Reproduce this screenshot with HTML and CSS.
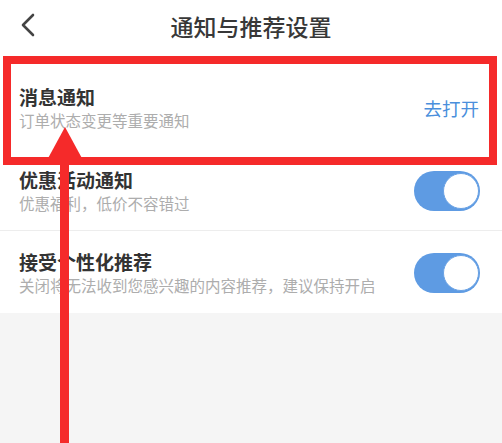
FILE: index.html
```html
<!DOCTYPE html>
<html lang="zh-CN">
<head>
    <meta charset="UTF-8">
    <title>通知与推荐设置</title>
    <link rel="stylesheet" href="styles.css">
</head>
<body>
    <div class="page">
        <header class="topbar">
            <a class="back" href="#">
                <svg width="14" height="24" viewBox="0 0 14 24"><path d="M12 2 L2 12 L12 22" fill="none" stroke="#444" stroke-width="2.6" stroke-linecap="round" stroke-linejoin="round"/></svg>
            </a>
            <h1 class="title">通知与推荐设置</h1>
        </header>

        <ul class="settings">
            <li class="row row-first">
                <div class="text">
                    <div class="name">消息通知</div>
                    <div class="desc">订单状态变更等重要通知</div>
                </div>
                <a class="open" href="#">去打开</a>
            </li>
            <li class="row">
                <div class="text">
                    <div class="name">优惠活动通知</div>
                    <div class="desc">优惠福利，低价不容错过</div>
                </div>
                <span class="switch on"><span class="knob"></span></span>
            </li>
            <li class="row row-last">
                <div class="text">
                    <div class="name">接受个性化推荐</div>
                    <div class="desc">关闭将无法收到您感兴趣的内容推荐，建议保持开启</div>
                </div>
                <span class="switch on"><span class="knob"></span></span>
            </li>
        </ul>

        <!-- annotation drawn over the screenshot -->
        <div class="mark-box"></div>
        <svg class="mark-arrow" width="502" height="443" viewBox="0 0 502 443">
            <rect x="60" y="150" width="9" height="293" fill="#f52a2a"/>
            <polygon points="65,127 46,162 84,162" fill="#f52a2a"/>
        </svg>
    </div>
</body>
</html>
```

FILE: styles.css
```css
html, body {
    margin: 0;
    padding: 0;
    background-color: #f5f5f5;
    font-family: "Noto Sans CJK SC", "Noto Sans", sans-serif;
}
.page {
    position: relative;
    width: 502px;
    height: 443px;
    overflow: hidden;
}
.topbar {
    position: relative;
    height: 52px;
    background-color: #fff;
    display: flex;
    align-items: center;
    justify-content: center;
}
.back {
    position: absolute;
    left: 21px;
    top: 13px;
    display: block;
    height: 24px;
}
.title {
    margin: 0;
    font-size: 23px;
    font-weight: 500;
    color: #383838;
    line-height: 30px;
}
.settings {
    list-style: none;
    margin: 0;
    padding: 0;
    background-color: #fff;
}
.row {
    display: flex;
    align-items: center;
    justify-content: space-between;
    padding: 17px 22px 16px 19px;
    border-bottom: 1px solid #ededed;
}
.row-first {
    padding-top: 33px;
    padding-bottom: 20px;
    border-bottom: none;
}
.row-last {
    padding-top: 19px;
    padding-bottom: 17px;
    border-bottom: none;
}
.name {
    font-size: 19px;
    font-weight: 700;
    color: #333;
    line-height: 24px;
}
.desc {
    font-size: 15.5px;
    color: #adadad;
    line-height: 22px;
}
.open {
    font-size: 18.5px;
    color: #4a8fdc;
    text-decoration: none;
    margin-right: 1px;
}
.switch {
    position: relative;
    display: block;
    width: 66px;
    height: 40px;
    border-radius: 20px;
    background-color: #5e9be3;
}
.knob {
    position: absolute;
    right: 1px;
    top: 2px;
    width: 34px;
    height: 34px;
    border-radius: 50%;
    background-color: #fff;
    border: 1px solid #6aa2e4;
}
.mark-box {
    position: absolute;
    left: 3px;
    top: 56px;
    width: 478px;
    height: 93px;
    border: 8px solid #f52a2a;
}
.mark-arrow {
    position: absolute;
    left: 0;
    top: 0;
    pointer-events: none;
}
```
